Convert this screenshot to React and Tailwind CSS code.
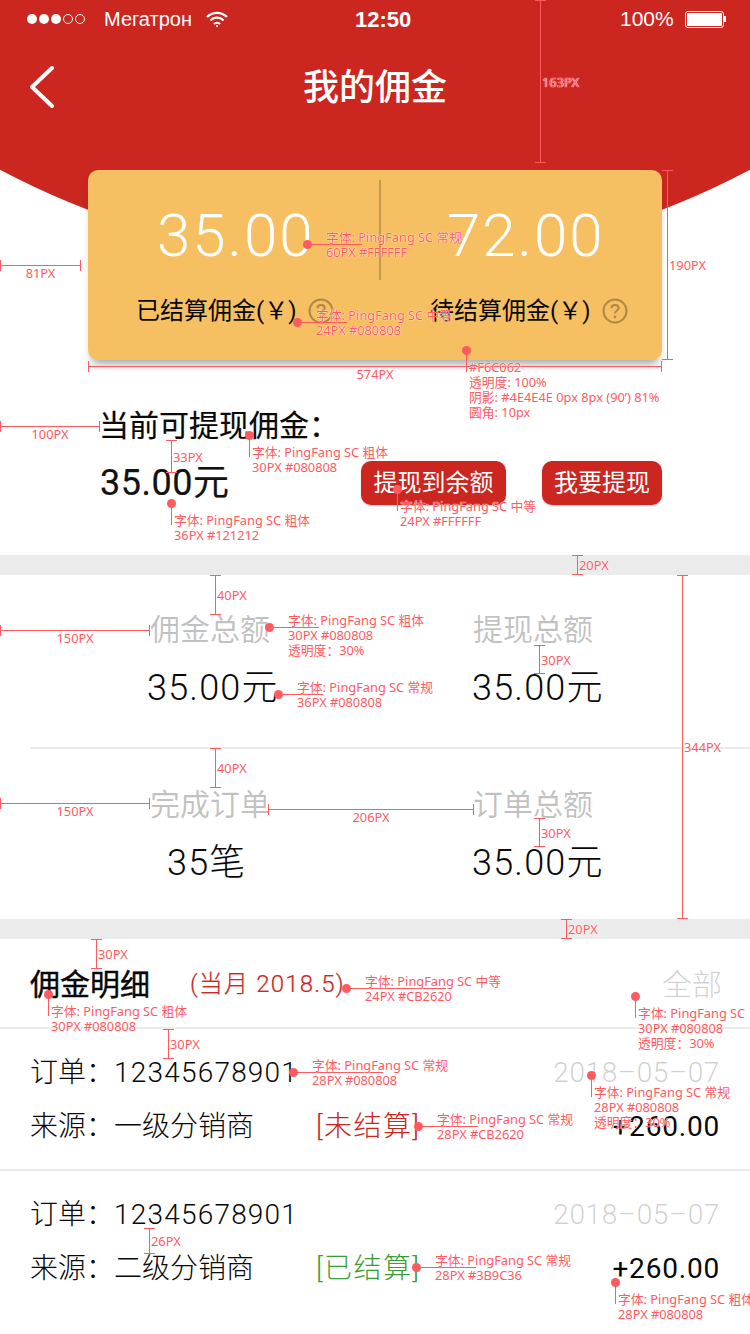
import React from "react";

const cn = "font-['Roboto','Noto_Sans_CJK_SC',sans-serif]";

// red measuring marks laid over the design
function Note({ className = "", lines }) {
  return (
    <div className={"whitespace-nowrap text-[12.8px] leading-[15px] text-[#ff5a5f] font-['Noto_Sans','Noto_Sans_CJK_SC',sans-serif] [text-shadow:0_0_1px_#fff,0_0_1px_#fff] " + className}>
      {lines.map((l) => (
        <div key={l}>{l}</div>
      ))}
    </div>
  );
}

function VRuler({ className, label }) {
  return (
    <div className={"absolute w-[11px] flex justify-center border-y border-[#ff5a5f] " + className}>
      <div className="w-px bg-[#ff5a5f]" />
      <Note className="absolute left-[7px] top-1/2 -translate-y-1/2" lines={[label]} />
    </div>
  );
}

function HRuler({ className, label }) {
  return (
    <div className={"absolute h-[11px] flex items-center border-x border-[#ff5a5f] " + className}>
      <div className="w-full h-px bg-[#ff5a5f]" />
      <div className="absolute inset-x-0 top-[6px] flex justify-center">
        <Note lines={[label]} />
      </div>
    </div>
  );
}

// dot with a line running right, the note sits beside it
function SideNote({ className, line, lines }) {
  return (
    <div className={"absolute w-[9px] h-[9px] rounded-full bg-[#ff5a5f] " + className}>
      <div className={"absolute left-[4px] top-[4px] h-px bg-[#ff5a5f] " + line} />
      <Note className="absolute left-[23px] top-[-10px]" lines={lines} />
    </div>
  );
}

// dot with a line running down
function DownNote({ className, lines }) {
  return (
    <div className={"absolute w-[9px] h-[9px] rounded-full bg-[#ff5a5f] " + className}>
      <div className="absolute left-[4px] top-[4px] w-px h-[22px] bg-[#ff5a5f]" />
      <Note className="absolute left-[7px] top-[14px]" lines={lines} />
    </div>
  );
}

function Question() {
  return (
    <svg width="26" height="26" viewBox="0 0 26 26" className="opacity-30">
      <circle cx="13" cy="13" r="11.5" fill="none" stroke="#080808" strokeWidth="2" />
      <path d="M9.5 10.2c0-2 1.6-3.2 3.6-3.2s3.5 1.2 3.5 3c0 2.8-3.6 2.8-3.6 5.6" fill="none" stroke="#080808" strokeWidth="2" />
      <circle cx="13" cy="19" r="1.4" fill="#080808" />
    </svg>
  );
}

function StatusBar() {
  return (
    <div className="flex items-center h-[38px] pl-[27px] pr-[23px] text-white font-['Liberation_Sans',sans-serif]">
      <div className="flex gap-[2px] w-[77px]">
        <span className="w-[10px] h-[10px] rounded-full bg-white" />
        <span className="w-[10px] h-[10px] rounded-full bg-white" />
        <span className="w-[10px] h-[10px] rounded-full bg-white" />
        <span className="w-[10px] h-[10px] rounded-full border border-white" />
        <span className="w-[10px] h-[10px] rounded-full border border-white" />
      </div>
      <span className="text-[20px] w-[102px]">Мегатрон</span>
      <svg width="22" height="17" viewBox="0 0 22 17" fill="none" stroke="#fff" strokeWidth="2.2">
        <path d="M1 6a14 14 0 0 1 20 0" />
        <path d="M4.5 9.5a9 9 0 0 1 13 0" />
        <path d="M8 13a4.2 4.2 0 0 1 6 0" />
        <circle cx="11" cy="15" r="1" fill="#fff" stroke="none" />
      </svg>
      <span className="text-[22px] font-bold ml-[127px] w-[265px]">12:50</span>
      <span className="text-[21px] w-[65px]">100%</span>
      <div className="flex items-center">
        <div className="w-[39px] h-[17px] rounded-[3px] border border-white p-[1px]">
          <div className="w-full h-full bg-white rounded-[1px]" />
        </div>
        <div className="w-[2px] h-[6px] bg-white" />
      </div>
    </div>
  );
}

function Stat({ title, value, valueClass }) {
  return (
    <div className="flex flex-col">
      <div className="text-[30px] leading-[40px] text-[#080808]/25">{title}</div>
      <div className={"text-[36px] leading-[44px] font-light tracking-[1.2px] text-[#080808] mt-[16px] " + valueClass}>{value}</div>
    </div>
  );
}

function Order({ source, status, statusClass, className }) {
  return (
    <div className={"px-[30px] " + className}>
      <div className="flex justify-between items-center h-[40px]">
        <div className="text-[28px] font-light text-[#080808]">
          订单：<span className="tracking-[1.2px]">12345678901</span>
        </div>
        <div className="text-[28px] font-light tracking-[0.6px] text-[#080808]/20">2018–05–07</div>
      </div>
      <div className="flex items-center h-[40px] mt-[14px]">
        <div className="text-[28px] font-light text-[#080808] w-[286px]">来源：{source}</div>
        <div className={"text-[28px] font-light tracking-[1.4px] " + statusClass}>{status}</div>
        <div className="ml-auto text-[28px] tracking-[0.8px] text-[#080808]">+260.00</div>
      </div>
    </div>
  );
}

export default function App() {
  return (
    <div className={"relative w-[750px] h-[1334px] overflow-hidden bg-white " + cn}>
      {/* red arc behind the card */}
      <div className="absolute left-[-426px] top-[-1339px] w-[1602px] h-[1602px] rounded-full bg-[#cb2620]" />

      <div className="relative">
        <StatusBar />
        <div className="relative flex items-center justify-center h-[100px]">
          <svg width="26" height="44" viewBox="0 0 26 44" className="absolute left-[29px] top-[27px]" fill="none" stroke="#fff" strokeWidth="4" strokeLinecap="round" strokeLinejoin="round">
            <path d="M23 3 3 22l20 19" />
          </svg>
          <div className="text-[36px] font-medium text-white">我的佣金</div>
        </div>

        {/* card */}
        <div className="mt-[32px] ml-[88px] w-[574px] h-[190px] rounded-[10px] bg-[#f6c062] shadow-[0_8px_8px_-4px_rgba(78,78,78,0.5)] relative">
          <div className="absolute left-[291px] top-[10px] w-[2px] h-[100px] bg-[#c09a50]" />
          <div className="flex pt-[28px] h-[123px]">
            <div className="w-[292px] pl-[69px] text-[60px] leading-[76px] font-light tracking-[2px] text-white">35.00</div>
            <div className="pl-[67px] text-[60px] leading-[76px] font-light tracking-[2px] text-white">72.00</div>
          </div>
          <div className="flex items-center">
            <div className="flex items-center w-[292px] pl-[48px]">
              <span className="text-[24px] text-[#080808]">已结算佣金(￥)</span>
              <span className="ml-[11px]"><Question /></span>
            </div>
            <div className="flex items-center pl-[50px]">
              <span className="text-[24px] text-[#080808]">待结算佣金(￥)</span>
              <span className="ml-[11px]"><Question /></span>
            </div>
          </div>
        </div>

        {/* withdraw */}
        <div className="flex h-[195px] pl-[99px] pr-[88px]">
          <div>
            <div className="mt-[46px] text-[30px] leading-[40px] text-[#080808] [-webkit-text-stroke:0.2px_#080808]">当前可提现佣金：</div>
            <div className="mt-[15px] ml-px text-[36px] leading-[44px] tracking-[0.5px] text-[#121212] [-webkit-text-stroke:0.2px_#121212]">35.00元</div>
          </div>
          <div className="ml-auto flex gap-[36px] mt-[101px] h-[44px]">
            <button className="w-[145px] rounded-[10px] bg-[#cb2620] text-white text-[24px] shadow-[0_1px_2px_rgba(0,0,0,0.2)]">提现到余额</button>
            <button className="w-[120px] rounded-[10px] bg-[#cb2620] text-white text-[24px] shadow-[0_1px_2px_rgba(0,0,0,0.2)]">我要提现</button>
          </div>
        </div>
      </div>

      <div className="relative h-[20px] bg-[#ebebeb]" />

      {/* totals */}
      <div className="relative h-[344px]">
        <div className="grid grid-cols-[323px_1fr] pl-[150px] h-[172px] pt-[35px]">
          <Stat title="佣金总额" value="35.00元" valueClass="ml-[-3px]" />
          <Stat title="提现总额" value="35.00元" valueClass="ml-[-1px]" />
        </div>
        <div className="ml-[30px] h-[2px] bg-[#ebebeb]" />
        <div className="grid grid-cols-[323px_1fr] pl-[150px] pt-[36px]">
          <Stat title="完成订单" value="35笔" valueClass="ml-[17px]" />
          <Stat title="订单总额" value="35.00元" valueClass="ml-[-1px]" />
        </div>
      </div>

      <div className="relative h-[20px] bg-[#ebebeb]" />

      {/* detail list */}
      <div className="relative flex items-center h-[90px] pl-[30px] pr-[28px] pt-[2px] border-b-2 border-[#ebebeb]">
        <div className="text-[30px] text-[#080808] [-webkit-text-stroke:0.4px_#080808]">佣金明细</div>
        <div className="ml-[40px] text-[24px] font-light tracking-[1.2px] text-[#cb2620] [-webkit-text-stroke:0.2px_#cb2620]">(当月 2018.5)</div>
        <div className="ml-auto text-[30px] font-light text-[#080808]/20">全部</div>
      </div>
      <Order className="relative h-[142px] pt-[24px] border-b-2 border-[#ebebeb]" source="一级分销商" status="[未结算]" statusClass="text-[#cb2620]" />
      <Order className="relative pt-[24px]" source="二级分销商" status="[已结算]" statusClass="text-[#3b9c36]" />

      {/* measuring marks */}
      <VRuler className="left-[535px] top-0 h-[163px]" label="163PX" />
      <VRuler className="left-[662px] top-[170px] h-[190px]" label="190PX" />
      <VRuler className="left-[166px] top-[440px] h-[33px]" label="33PX" />
      <VRuler className="left-[572px] top-[555px] h-[20px]" label="20PX" />
      <VRuler className="left-[210px] top-[575px] h-[40px]" label="40PX" />
      <VRuler className="left-[534px] top-[645px] h-[29px]" label="30PX" />
      <VRuler className="left-[677px] top-[575px] h-[344px]" label="344PX" />
      <VRuler className="left-[210px] top-[748px] h-[40px]" label="40PX" />
      <VRuler className="left-[534px] top-[818px] h-[29px]" label="30PX" />
      <VRuler className="left-[561px] top-[919px] h-[20px]" label="20PX" />
      <VRuler className="left-[91px] top-[939px] h-[30px]" label="30PX" />
      <VRuler className="left-[163px] top-[1029px] h-[30px]" label="30PX" />
      <VRuler className="left-[144px] top-[1228px] h-[26px]" label="26PX" />

      <HRuler className="left-0 top-[260px] w-[81px]" label="81PX" />
      <HRuler className="left-[88px] top-[361px] w-[574px]" label="574PX" />
      <HRuler className="left-0 top-[421px] w-[100px]" label="100PX" />
      <HRuler className="left-0 top-[625px] w-[150px]" label="150PX" />
      <HRuler className="left-0 top-[798px] w-[150px]" label="150PX" />
      <HRuler className="left-[268px] top-[804px] w-[206px]" label="206PX" />

      <SideNote className="left-[303px] top-[240px]" line="w-[55px]" lines={["字体: PingFang SC 常规", "60PX #FFFFFF"]} />
      <SideNote className="left-[293px] top-[318px]" line="w-[50px]" lines={["字体: PingFang SC 中等", "24PX #080808"]} />
      <SideNote className="left-[265px] top-[623px]" line="w-[50px]" lines={["字体: PingFang SC 粗体", "30PX #080808", "透明度：30%"]} />
      <SideNote className="left-[274px] top-[690px]" line="w-[45px]" lines={["字体: PingFang SC 常规", "36PX #080808"]} />
      <SideNote className="left-[342px] top-[984px]" line="w-[100px]" lines={["字体: PingFang SC 中等", "24PX #CB2620"]} />
      <SideNote className="left-[289px] top-[1068px]" line="w-[90px]" lines={["字体: PingFang SC 常规", "28PX #080808"]} />
      <SideNote className="left-[414px] top-[1122px]" line="w-[60px]" lines={["字体: PingFang SC 常规", "28PX #CB2620"]} />
      <SideNote className="left-[412px] top-[1263px]" line="w-[60px]" lines={["字体: PingFang SC 常规", "28PX #3B9C36"]} />

      <DownNote className="left-[462px] top-[346px]" lines={["#F6C062", "透明度: 100%", "阴影: #4E4E4E 0px 8px (90’) 81%", "圆角: 10px"]} />
      <DownNote className="left-[245px] top-[431px]" lines={["字体: PingFang SC 粗体", "30PX #080808"]} />
      <DownNote className="left-[167px] top-[499px]" lines={["字体: PingFang SC 粗体", "36PX #121212"]} />
      <DownNote className="left-[393px] top-[485px]" lines={["字体: PingFang SC 中等", "24PX #FFFFFF"]} />
      <DownNote className="left-[44px] top-[990px]" lines={["字体: PingFang SC 粗体", "30PX #080808"]} />
      <DownNote className="left-[631px] top-[992px]" lines={["字体: PingFang SC", "30PX #080808", "透明度：30%"]} />
      <DownNote className="left-[587px] top-[1071px]" lines={["字体: PingFang SC 常规", "28PX #080808", "透明度：30%"]} />
      <DownNote className="left-[611px] top-[1278px]" lines={["字体: PingFang SC 粗体", "28PX #080808"]} />
    </div>
  );
}
